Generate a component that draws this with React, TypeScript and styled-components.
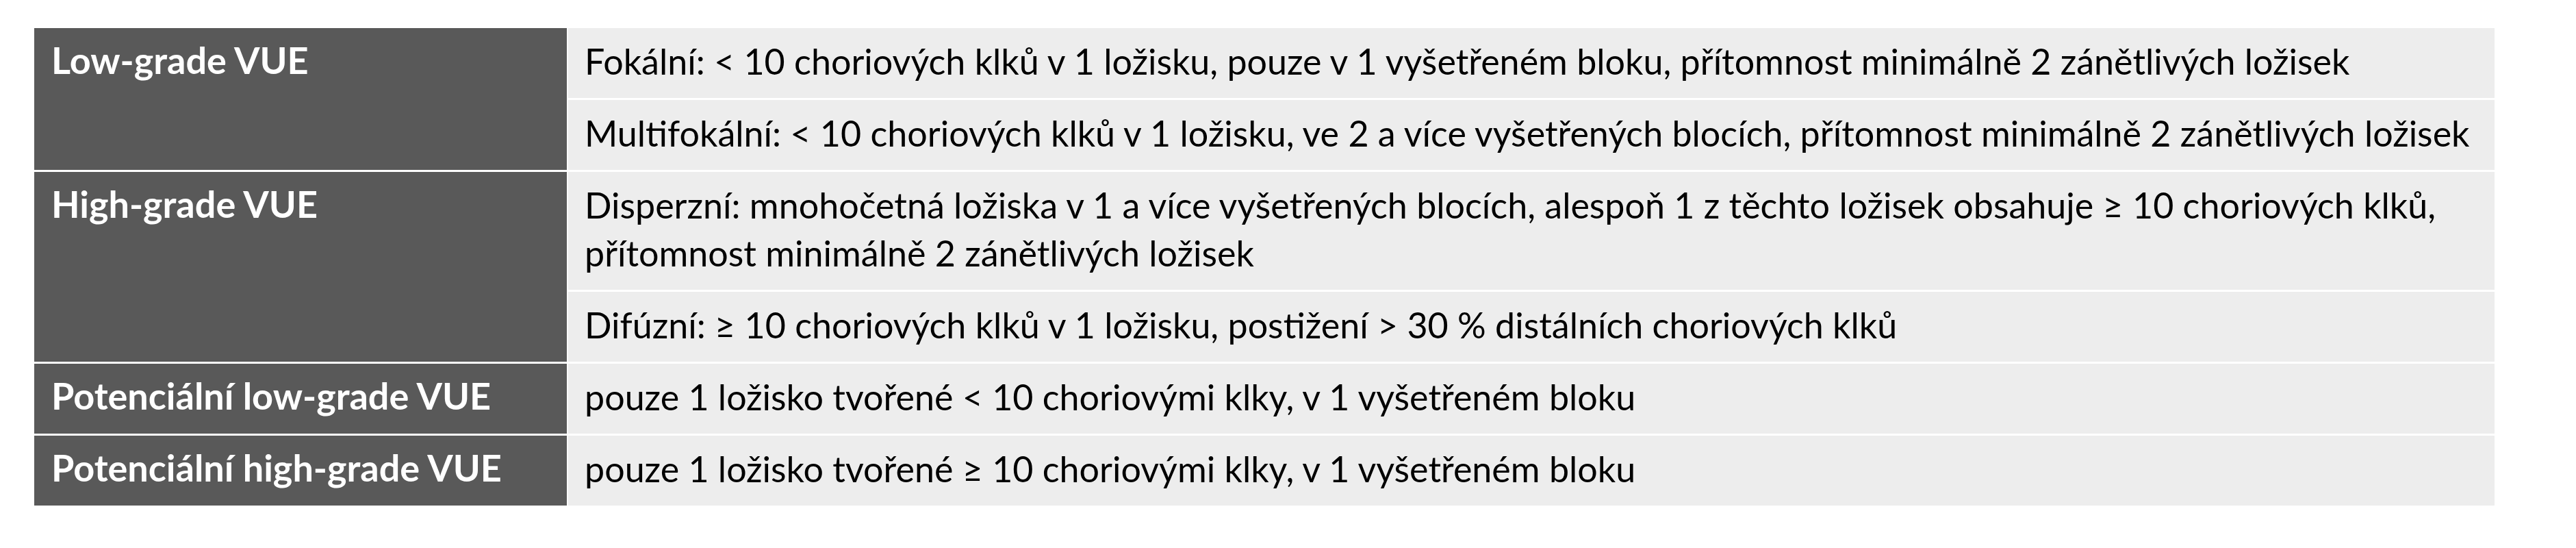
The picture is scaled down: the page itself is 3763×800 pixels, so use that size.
import React from 'react';
import styled, { createGlobalStyle } from 'styled-components';

const GlobalStyle = createGlobalStyle`
  html, body {
    margin: 0;
    padding: 0;
    background: #ffffff;
  }
  body {
    font-family: "Lato", "Liberation Sans", sans-serif;
  }
`;

const Page = styled.div`
  padding: 41px 0 0 50px;
`;

const Table = styled.div`
  display: grid;
  grid-template-columns: 778px 2814px;
  column-gap: 2px;
  row-gap: 3px;
  background: #ffffff;
`;

const Label = styled.div<{ $span?: number }>`
  grid-row: span ${(p) => p.$span ?? 1};
  background: #595959;
  color: #ffffff;
  font-weight: 700;
  font-size: 54px;
  line-height: 70px;
  padding: 12px 20px 19px 25px;
  white-space: nowrap;
`;

const Cell = styled.div`
  background: #ededed;
  color: #000000;
  font-weight: 400;
  font-size: 52px;
  line-height: 70px;
  padding: 13px 24px 19px 24px;
  white-space: nowrap;
`;

type Group = {
  label: string;
  items: React.ReactNode[];
};

const groups: Group[] = [
  {
    label: 'Low-grade VUE',
    items: [
      'Fokální: < 10 choriových klků v 1 ložisku, pouze v 1 vyšetřeném bloku, přítomnost minimálně 2 zánětlivých ložisek',
      'Multifokální: < 10 choriových klků v 1 ložisku, ve 2 a více vyšetřených blocích, přítomnost minimálně 2 zánětlivých ložisek',
    ],
  },
  {
    label: 'High-grade VUE',
    items: [
      <>
        Disperzní: mnohočetná ložiska v 1 a více vyšetřených blocích, alespoň 1 z těchto ložisek obsahuje ≥ 10 choriových klků,
        <br />
        přítomnost minimálně 2 zánětlivých ložisek
      </>,
      'Difúzní: ≥ 10 choriových klků v 1 ložisku, postižení > 30 % distálních choriových klků',
    ],
  },
  {
    label: 'Potenciální low-grade VUE',
    items: ['pouze 1 ložisko tvořené < 10 choriovými klky, v 1 vyšetřeném bloku'],
  },
  {
    label: 'Potenciální high-grade VUE',
    items: ['pouze 1 ložisko tvořené ≥ 10 choriovými klky, v 1 vyšetřeném bloku'],
  },
];

export default function App() {
  return (
    <>
      <GlobalStyle />
      <Page>
        <Table>
          {groups.map((g) => (
            <React.Fragment key={g.label}>
              <Label $span={g.items.length}>{g.label}</Label>
              {g.items.map((item, i) => (
                <Cell key={i}>{item}</Cell>
              ))}
            </React.Fragment>
          ))}
        </Table>
      </Page>
    </>
  );
}
